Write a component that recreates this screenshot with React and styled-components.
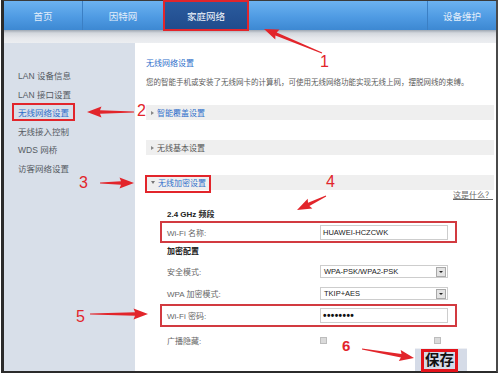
import React from "react"
import styled, { createGlobalStyle } from "styled-components"

const GlobalStyle = createGlobalStyle`
  html, body {
    margin: 0;
    padding: 0;
    background: #fff;
  }
  body {
    font-family: "Liberation Sans", "Noto Sans CJK SC", sans-serif;
  }
`

const RED = "#e2252b"

const Page = styled.div`
  position: relative;
  width: 500px;
  height: 375px;
  overflow: hidden;
  background: #fff;
`

const Frame = styled.div`
  box-sizing: border-box;
  margin-left: 1px;
  width: 497px;
  height: 373px;
  border-top: 1px solid #3a3a3a;
  border-left: 3px solid #2b2b2b;
  border-right: 2px solid #4a4a4a;
  border-bottom: 2px solid #2b2b2b;
  display: flex;
  flex-direction: column;
`

const Nav = styled.div`
  height: 29px;
  flex: none;
  display: flex;
  background: linear-gradient(#6cb2f0, #4f9be3 55%, #3d88d2);
`

const Tab = styled.div`
  box-sizing: border-box;
  width: ${(p) => p.$w}px;
  flex: ${(p) => (p.$grow ? 1 : "none")};
  display: flex;
  align-items: center;
  justify-content: center;
  font-size: 9.5px;
  color: ${(p) => (p.$active ? "#f4f8fd" : "#e3eefa")};
  background: ${(p) =>
    p.$active ? "linear-gradient(#2c5c9f, #1f4b8c)" : "transparent"};
  border-left: ${(p) => (p.$divLeft ? "1px solid #3b7fc4" : "none")};
  border-right: ${(p) => (p.$divRight ? "1px solid #3b7fc4" : "none")};
  outline: ${(p) => (p.$marked ? `2px solid ${RED}` : "none")};
  outline-offset: -1px;
  position: relative;
  z-index: ${(p) => (p.$marked ? 2 : 0)};
`

const Band = styled.div`
  height: 13px;
  flex: none;
  background: linear-gradient(#9ea7b2, #d3d7dd 3px, #e6e8ec 8px, #eceef1);
`

const Main = styled.div`
  flex: 1;
  display: flex;
  min-height: 0;
`

const Sidebar = styled.div`
  box-sizing: border-box;
  width: 131px;
  flex: none;
  background: #d8dfe9;
  padding: 22.7px 0 0 8px;
  display: flex;
  flex-direction: column;
  align-items: flex-start;
`

const SideItem = styled.div`
  box-sizing: border-box;
  height: 18.6px;
  padding: 0 4px;
  display: flex;
  align-items: center;
  font-size: 8.5px;
  color: ${(p) => (p.$active ? "#2f6fcb" : "#555b63")};
  border: 2px solid ${(p) => (p.$marked ? RED : "transparent")};
`

const Content = styled.div`
  flex: 1;
  background: #fff;
  padding: 15px 2px 0 11px;
  display: flex;
  flex-direction: column;
`

const Title = styled.div`
  font-size: 8px;
  line-height: 12px;
  color: #2f6fcb;
`

const Desc = styled.div`
  margin-top: 7px;
  font-size: 7.5px;
  line-height: 12px;
  color: #5c5c5c;
  white-space: nowrap;
`

const Bars = styled.div`
  margin-top: 16px;
  display: flex;
  flex-direction: column;
  gap: 20px;
`

const Bar = styled.div`
  height: 15px;
  background: #efefef;
  display: flex;
  align-items: flex-start;
`

const Chip = styled.div`
  box-sizing: border-box;
  height: ${(p) => (p.$marked ? 18 : 15)}px;
  margin-left: -1px;
  padding: 0 3px ${(p) => (p.$marked ? 3 : 0)}px 4px;
  display: flex;
  align-items: center;
  gap: 3px;
  font-size: 8px;
  color: ${(p) => (p.$blue ? "#2f6fcb" : "#555")};
  border: 2px solid ${(p) => (p.$marked ? RED : "transparent")};
  border-bottom-width: ${(p) => (p.$marked ? 2 : 0)}px;
  border-top-width: ${(p) => (p.$marked ? 2 : 0)}px;
`

const Caret = styled.span`
  width: 0;
  height: 0;
  border-style: solid;
  border-color: transparent;
  ${(p) =>
    p.$open
      ? "border-width: 3px 2.5px 0 2.5px; border-top-color: #777;"
      : "border-width: 2.5px 0 2.5px 3px; border-left-color: #888;"}
`

const Help = styled.div`
  align-self: flex-end;
  margin-right: 1px;
  font-size: 8px;
  line-height: 12px;
  color: #666;
  text-decoration: underline;
`

const Form = styled.div`
  margin-left: 14px;
  width: 297px;
  display: flex;
  flex-direction: column;
`

const GroupTitle = styled.div`
  margin-top: ${(p) => p.$mt}px;
  padding-left: 7px;
  font-size: 8px;
  line-height: 12px;
  font-weight: bold;
  color: #222;
`

const Row = styled.div`
  box-sizing: border-box;
  height: ${(p) => p.$h}px;
  margin-top: ${(p) => p.$mt}px;
  padding: 0 7px 0 5px;
  display: flex;
  align-items: center;
  border: 2px solid ${(p) => (p.$marked ? "#d23a40" : "transparent")};
`

const Label = styled.div`
  width: 153px;
  flex: none;
  font-size: 8px;
  color: #666;
`

const Input = styled.div`
  box-sizing: border-box;
  width: 128px;
  height: 15px;
  border: 1px solid #cdcdcd;
  padding-left: 2px;
  display: flex;
  align-items: center;
  font-size: 7.5px;
  color: #222;
`

const Dots = styled.span`
  font-size: 10px;
  font-weight: bold;
  letter-spacing: 0.4px;
  color: #111;
`

const Select = styled.div`
  box-sizing: border-box;
  width: 128px;
  height: 13px;
  border: 1px solid #cdcdcd;
  padding-left: 3px;
  display: flex;
  align-items: center;
  justify-content: space-between;
  font-size: 7.5px;
  color: #222;
`

const DropBtn = styled.span`
  box-sizing: border-box;
  width: 10px;
  height: 10px;
  margin-right: 1px;
  background: #e3e3e3;
  border: 1px solid #a9a9a9;
  display: flex;
  align-items: center;
  justify-content: center;
  &::after {
    content: "";
    border-style: solid;
    border-color: #222 transparent transparent transparent;
    border-width: 2.5px 2px 0 2px;
  }
`

const Checks = styled.div`
  width: 121px;
  display: flex;
  justify-content: space-between;
`

const Check = styled.span`
  box-sizing: border-box;
  width: 7px;
  height: 7px;
  background: #dadada;
  border: 1px solid #bdbdbd;
`

const SaveRow = styled.div`
  display: flex;
  justify-content: flex-end;
  padding-right: 27px;
`

const SaveBox = styled.div`
  height: 22px;
  padding: 0 9px 0 6px;
  background: #d5dbe7;
  display: flex;
  align-items: flex-start;
  border-top: 1px solid #eef0f4;
`

const SaveBtn = styled.div`
  box-sizing: border-box;
  height: 23px;
  padding: 0 1px;
  border: 3px solid #e3121a;
  font-size: 14.5px;
  line-height: 16px;
  font-weight: bold;
  color: #111;
`

const Overlay = styled.svg`
  position: absolute;
  left: 0;
  top: 0;
  pointer-events: none;
`

const Num = styled.span`
  position: absolute;
  left: ${(p) => p.$x}px;
  top: ${(p) => p.$y}px;
  font-size: ${(p) => (p.$bold ? 15 : 16)}px;
  font-weight: ${(p) => (p.$bold ? "bold" : "normal")};
  line-height: 1;
  color: ${RED};
`

const arrows = [
  [322, 53, 264, 29],
  [134, 112, 87, 112],
  [100, 183, 134, 183],
  [326, 196, 297, 210],
  [90, 314, 148, 314],
  [362, 349, 414, 358],
]

const arrowPoints = ([x1, y1, x2, y2]) => {
  const len = Math.hypot(x2 - x1, y2 - y1)
  const ux = (x2 - x1) / len
  const uy = (y2 - y1) / len
  const nx = -uy
  const ny = ux
  const L = 13
  const bx = x2 - ux * L
  const by = y2 - uy * L
  const p = (x, y, k) => `${(x + nx * k).toFixed(1)},${(y + ny * k).toFixed(1)}`
  return [
    p(x1, y1, 0.4),
    p(bx, by, 1.7),
    p(bx - ux * 1.5, by - uy * 1.5, 5.5),
    p(x2, y2, 0),
    p(bx - ux * 1.5, by - uy * 1.5, -5.5),
    p(bx, by, -1.7),
    p(x1, y1, -0.4),
  ].join(" ")
}

const sideItems = [
  "LAN 设备信息",
  "LAN 接口设置",
  "无线网络设置",
  "无线接入控制",
  "WDS 网桥",
  "访客网络设置",
]

export default function App() {
  return (
    <Page>
      <GlobalStyle />
      <Frame>
        <Nav>
          <Tab $w={79} $divRight>首页</Tab>
          <Tab $w={81} $divRight>因特网</Tab>
          <Tab $w={84} $active $marked>家庭网络</Tab>
          <Tab $grow />
          <Tab $w={69} $divLeft>设备维护</Tab>
        </Nav>
        <Band />
        <Main>
          <Sidebar>
            {sideItems.map((t, i) => (
              <SideItem key={t} $active={i === 2} $marked={i === 2}>
                {t}
              </SideItem>
            ))}
          </Sidebar>
          <Content>
            <Title>无线网络设置</Title>
            <Desc>
              您的智能手机或安装了无线网卡的计算机，可使用无线网络功能实现无线上网，摆脱网线的束缚。
            </Desc>
            <Bars>
              <Bar>
                <Chip $blue>
                  <Caret />
                  智能覆盖设置
                </Chip>
              </Bar>
              <Bar>
                <Chip>
                  <Caret />
                  无线基本设置
                </Chip>
              </Bar>
              <Bar>
                <Chip $blue $marked>
                  <Caret $open />
                  无线加密设置
                </Chip>
              </Bar>
            </Bars>
            <Help>这是什么？</Help>
            <Form>
              <GroupTitle $mt={7}>2.4 GHz 频段</GroupTitle>
              <Row $h={22} $mt={0} $marked>
                <Label>Wi-Fi 名称:</Label>
                <Input>HUAWEI-HCZCWK</Input>
              </Row>
              <GroupTitle $mt={3}>加密配置</GroupTitle>
              <Row $h={19} $mt={4}>
                <Label>安全模式:</Label>
                <Select>
                  WPA-PSK/WPA2-PSK
                  <DropBtn />
                </Select>
              </Row>
              <Row $h={19} $mt={3}>
                <Label>WPA 加密模式:</Label>
                <Select>
                  TKIP+AES
                  <DropBtn />
                </Select>
              </Row>
              <Row $h={23} $mt={1} $marked>
                <Label>Wi-Fi 密码:</Label>
                <Input>
                  <Dots>••••••••</Dots>
                </Input>
              </Row>
              <Row $h={16} $mt={5}>
                <Label>广播隐藏:</Label>
                <Checks>
                  <Check />
                  <Check />
                </Checks>
              </Row>
            </Form>
            <SaveRow>
              <SaveBox>
                <SaveBtn>保存</SaveBtn>
              </SaveBox>
            </SaveRow>
          </Content>
        </Main>
      </Frame>
      <Overlay width="500" height="375" viewBox="0 0 500 375">
        {arrows.map((a, i) => (
          <polygon key={i} points={arrowPoints(a)} fill={RED} />
        ))}
      </Overlay>
      <Num $x={320} $y={54}>1</Num>
      <Num $x={137} $y={103}>2</Num>
      <Num $x={79} $y={175}>3</Num>
      <Num $x={326} $y={174}>4</Num>
      <Num $x={76} $y={309}>5</Num>
      <Num $x={342} $y={338} $bold>6</Num>
    </Page>
  )
}
